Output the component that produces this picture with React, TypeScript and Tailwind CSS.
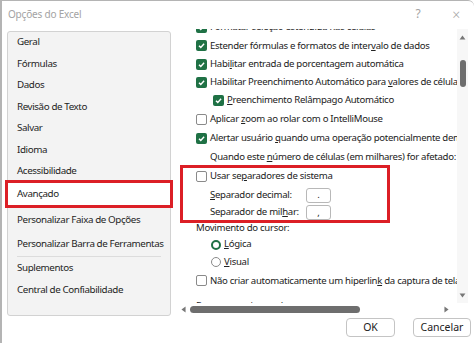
import { ReactNode } from 'react'

const font = { fontFamily: '"Noto Sans", "Open Sans", sans-serif' }

function Check({ checked }: { checked?: boolean }) {
  if (checked) {
    return (
      <span className="flex h-[11px] w-[11px] shrink-0 items-center justify-center rounded-[2px] bg-[#1f7145]">
        <svg viewBox="0 0 10 10" className="h-[9px] w-[9px]">
          <path d="M2.2 5.2 L4.2 7.1 L7.9 3.1" stroke="white" strokeWidth="1.6" fill="none" />
        </svg>
      </span>
    )
  }
  return <span className="h-[11px] w-[11px] shrink-0 rounded-[2px] border border-[#8a8a8a] bg-white" />
}

function Radio({ selected }: { selected?: boolean }) {
  return selected ? (
    <span className="h-[10px] w-[10px] shrink-0 rounded-full border-[2.5px] border-[#1f7145] bg-white" />
  ) : (
    <span className="h-[10px] w-[10px] shrink-0 rounded-full border border-[#8a8a8a] bg-white" />
  )
}

function Row({ h, indent, children }: { h: string; indent: string; children: ReactNode }) {
  return <div className={`flex items-center whitespace-nowrap ${h} ${indent}`}>{children}</div>
}

const navTop = ['Geral', 'Fórmulas', 'Dados', 'Revisão de Texto', 'Salvar', 'Idioma', 'Acessibilidade']

export default function App() {
  return (
    <div
      style={font}
      className="relative h-[343px] w-[474px] overflow-hidden rounded-tr-[6px] border-t border-l-2 border-[#b4b4b4] bg-white text-[9.6px] tracking-[-0.3px] text-[#222]"
    >
      {/* title bar */}
      <div className="flex h-[26px] items-center justify-between pl-[6px] pr-[14px] text-[#a3a3a3]">
        <span className="text-[10px] tracking-[-0.2px]">Opções do Excel</span>
        <div className="flex items-center gap-[32px] text-[12px]">
          <span>?</span>
          <span className="text-[14px] font-light">×</span>
        </div>
      </div>

      <div className="flex h-[289px]">
        {/* nav */}
        <div className="ml-[5px] mt-[4px] h-[285px] w-[164px] whitespace-nowrap rounded-[3px] border border-[#d2d2d2] bg-[#f3f3f3] text-[9.8px] tracking-[-0.4px] text-[#1e1e1e]">
          {navTop.map((t) => (
            <div key={t} className="flex h-[21.5px] items-center pl-[9px]">
              {t}
            </div>
          ))}
          <div className="-mx-[3px] -mt-[2.5px] flex h-[28px] items-center border-[3px] border-[#dc1f26] bg-white pl-[9px]">
            Avançado
          </div>
          <div className="flex h-[24px] items-center pl-[9px]">Personalizar Faixa de Opções</div>
          <div className="flex h-[24px] items-center pl-[9px]">Personalizar Barra de Ferramentas</div>
          <div className="mx-[9px] h-px bg-[#dcdcdc]" />
          <div className="flex h-[22px] items-center pl-[9px]">Suplementos</div>
          <div className="flex h-[22px] items-center pl-[9px]">Central de Confiabilidade</div>
        </div>

        {/* content */}
        <div className="ml-[9px] mt-[2px] flex flex-col">
          <div className="flex h-[274px]">
            <div className="h-full w-[277px] overflow-hidden">
              <div className="-mt-[10.75px]">
                <Row h="h-[18.5px]" indent="pl-[16px]">
                  <Check checked />
                  <span className="ml-[3px]">Formatar seleção estendida nas células</span>
                </Row>
                <Row h="h-[18.25px]" indent="pl-[16px]">
                  <Check checked />
                  <span className="ml-[3px]">
                    Estender fórmulas e formatos de inter<u>v</u>alo de dados
                  </span>
                </Row>
                <Row h="h-[18px]" indent="pl-[16px]">
                  <Check checked />
                  <span className="ml-[3px]">
                    Habi<u>l</u>itar entrada de porcentagem automática
                  </span>
                </Row>
                <Row h="h-[18px]" indent="pl-[16px]">
                  <Check checked />
                  <span className="ml-[3px]">
                    Habilitar Preenchimento Automático para <u>v</u>alores de célula
                  </span>
                </Row>
                <Row h="h-[19px]" indent="pl-[33px]">
                  <Check checked />
                  <span className="ml-[3px]">
                    <u>P</u>reenchimento Relâmpago Automático
                  </span>
                </Row>
                <Row h="h-[19px]" indent="pl-[16px]">
                  <Check />
                  <span className="ml-[3px]">
                    Aplicar <u>z</u>oom ao rolar com o IntelliMouse
                  </span>
                </Row>
                <Row h="h-[18.5px]" indent="pl-[16px]">
                  <Check checked />
                  <span className="ml-[3px]">
                    Alertar usuário <u>q</u>uando uma operação potencialmente demorada for executada
                  </span>
                </Row>
                <Row h="h-[19px]" indent="pl-[30px]">
                  <span>
                    Quando este <u>n</u>úmero de células (em milhares) for afetado:
                  </span>
                </Row>
                <div className="relative">
                  <Row h="h-[19.5px]" indent="pl-[16px]">
                    <Check />
                    <span className="ml-[3px]">
                      Usar se<u>p</u>aradores de sistema
                    </span>
                  </Row>
                  <Row h="h-[18.5px]" indent="pl-[30px]">
                    <span className="w-[96px]">
                      <u>S</u>eparador decimal:
                    </span>
                    <span className="flex h-[15px] w-[25px] items-center justify-center rounded-[3px] border border-[#b8b8b8] leading-none">
                      .
                    </span>
                  </Row>
                  <Row h="h-[16px]" indent="pl-[30px]">
                    <span className="w-[96px]">
                      Separador de mil<u>h</u>ar:
                    </span>
                    <span className="flex h-[15px] w-[25px] items-center justify-center rounded-[3px] border border-[#b8b8b8] leading-none">
                      ,
                    </span>
                  </Row>
                  <div className="pointer-events-none absolute -top-[1.5px] -bottom-[2.5px] left-0 z-10 w-[210px] border-[3px] border-[#dc1f26]" />
                </div>
                <Row h="h-[15.5px]" indent="pl-[16px]">
                  <span>Movimento do cursor:</span>
                </Row>
                <Row h="h-[17px]" indent="pl-[31px]">
                  <Radio selected />
                  <span className="ml-[3px]">
                    <u>L</u>ógica
                  </span>
                </Row>
                <Row h="h-[18.5px]" indent="pl-[31px]">
                  <Radio />
                  <span className="ml-[3px]">
                    <u>V</u>isual
                  </span>
                </Row>
                <Row h="h-[18.5px]" indent="pl-[16px]">
                  <Check />
                  <span className="ml-[3px]">
                    Não criar automaticamente um hiperlin<u>k</u> da captura de tela
                  </span>
                </Row>
                <Row h="h-[33px]" indent="pl-[16px]">
                  <span>Recortar, copiar e colar</span>
                </Row>
              </div>
            </div>
            {/* vertical scrollbar */}
            <div className="flex h-full w-[11px] flex-col items-center bg-[#f7f7f7]">
              <svg viewBox="0 0 8 6" className="mt-[6px] h-[5px] w-[7px]">
                <path d="M4 0.5 L7.5 5.5 L0.5 5.5 Z" fill="#777" />
              </svg>
              <div className="mt-[20px] h-[27px] w-[6px] rounded-full bg-[#6e6e6e]" />
              <div className="flex-1" />
              <svg viewBox="0 0 8 6" className="mb-[5px] h-[5px] w-[7px]">
                <path d="M0.5 0.5 L7.5 0.5 L4 5.5 Z" fill="#777" />
              </svg>
            </div>
          </div>
          {/* horizontal scrollbar */}
          <div className="flex h-[12px] w-[277px] items-center bg-white">
            <svg viewBox="0 0 6 8" className="ml-[1px] h-[7px] w-[5px]">
              <path d="M0.5 4 L5.5 0.5 L5.5 7.5 Z" fill="#777" />
            </svg>
            <div className="ml-[4px] h-[7px] w-[170px] rounded-full bg-[#6e6e6e]" />
            <div className="flex-1" />
            <svg viewBox="0 0 6 8" className="mr-[8px] h-[7px] w-[5px]">
              <path d="M5.5 4 L0.5 0.5 L0.5 7.5 Z" fill="#777" />
            </svg>
          </div>
        </div>
      </div>

      {/* footer */}
      <div className="mt-[2px] flex justify-end gap-[18px] pr-[3px] text-[10.5px] tracking-normal">
        <button className="flex h-[19px] w-[49px] items-center justify-center rounded-[4px] border border-[#c4c4c4] bg-white">
          OK
        </button>
        <button className="flex h-[19px] w-[58px] items-center justify-center rounded-[4px] border border-[#c4c4c4] bg-white">
          Cancelar
        </button>
      </div>
    </div>
  )
}
